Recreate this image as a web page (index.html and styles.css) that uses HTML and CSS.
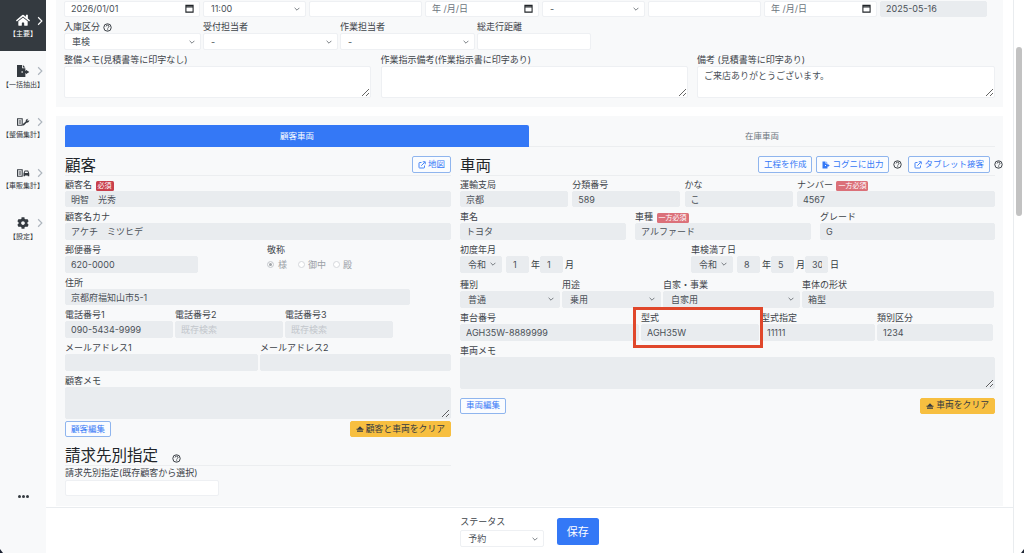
FILE: index.html
```html
<!DOCTYPE html>
<html lang="ja">
<head>
<meta charset="utf-8">
<title>入庫</title>
<link rel="stylesheet" href="styles.css">
</head>
<body>
<svg class="defs" aria-hidden="true">
  <symbol id="q" viewBox="0 0 16 16"><circle cx="8" cy="8" r="6.6" fill="none" stroke="currentColor" stroke-width="1.7"/><path d="M5.4 6.2C5.5 4.6 6.6 3.8 8.1 3.8c1.5 0 2.6.9 2.6 2.2 0 1-.6 1.5-1.3 2-.7.5-1 .8-1 1.6v.3" fill="none" stroke="currentColor" stroke-width="1.6"/><circle cx="8.3" cy="12" r="1" fill="currentColor"/></symbol>
  <symbol id="ext" viewBox="0 0 16 16"><path d="M7 3H3.2C2.5 3 2 3.5 2 4.2v8.6c0 .7.5 1.2 1.2 1.2h8.6c.7 0 1.2-.5 1.2-1.2V9" fill="none" stroke="currentColor" stroke-width="1.8"/><path d="M6.5 9.5 13.500 2.500M9.500 1.500H14.500V6.500" fill="none" stroke="currentColor" stroke-width="1.8"/></symbol>
  <symbol id="clear" viewBox="0 0 16 16"><path d="M8 2.5 13 7.5 15 7.5 15 9.5 1 9.5 1 7.5 3 7.5zM2 11h12v2.500H2z" fill="currentColor"/></symbol>
  <symbol id="chev" viewBox="0 0 8 12"><path d="M1.5 1 6.5 6 1.5 11" fill="none" stroke="currentColor" stroke-width="1.5"/></symbol>
</svg>
<div class="app">
  <nav class="side">
    <a class="nav-item active">
      <span class="nav-icons">
        <svg class="ico-home" viewBox="0 0 576 512"><path fill="currentColor" d="M280.37 148.26L96 300.11V464a16 16 0 0 0 16 16l112.06-.29a16 16 0 0 0 15.92-16V368a16 16 0 0 1 16-16h64a16 16 0 0 1 16 16v95.64a16 16 0 0 0 16 16.05L464 480a16 16 0 0 0 16-16V300L295.67 148.26a12.19 12.19 0 0 0-15.3 0zM571.6 251.47L488 182.56V44.05a12 12 0 0 0-12-12h-56a12 12 0 0 0-12 12v72.61L318.47 43a48 48 0 0 0-61 0L4.34 251.47a12 12 0 0 0-1.6 16.9l25.5 31A12 12 0 0 0 45.15 301l235.22-193.74a12.19 12.19 0 0 1 15.3 0L530.9 301a12 12 0 0 0 16.9-1.6l25.5-31a12 12 0 0 0-1.7-16.93z"/></svg>
        <svg class="ico-chev"><use href="#chev"/></svg>
      </span>
      <span class="nav-label">【主要】</span>
    </a>
    <a class="nav-item">
      <span class="nav-icons">
        <svg class="ico-file" viewBox="0 0 16 14"><path fill="currentColor" d="M1 0h5.500v3.600H10V6.500H6V8.500h4V13H1zM7.400 0 10 2.700H7.400zM10.500 5l3.800 2.500-3.800 2.500V8.600H7V6.400h3.500z"/></svg>
        <svg class="ico-chev"><use href="#chev"/></svg>
      </span>
      <span class="nav-label">【一括抽出】</span>
    </a>
    <a class="nav-item">
      <span class="nav-icons">
        <svg class="ico-mini" viewBox="0 0 14 8"><path fill="none" stroke="currentColor" stroke-width="1.1" d="M.6.6h5v6.800h-5zM1.800 2.800h2.600M1.800 5h2.600"/><path fill="currentColor" d="M6.300 7.600 6 6.500l3.400-3C9.200 2 10.200.5 12.300.5l-1.300 1.400.7 1 1.500-1c.2 1.800-1.500 3.200-3 2.800L7.400 7.800z"/></svg>
        <svg class="ico-chev"><use href="#chev"/></svg>
      </span>
      <span class="nav-label">【整備集計】</span>
    </a>
    <a class="nav-item">
      <span class="nav-icons">
        <svg class="ico-mini" viewBox="0 0 14 8"><path fill="none" stroke="currentColor" stroke-width="1.1" d="M.6.6h5v6.800h-5zM1.800 2.800h2.600M1.800 5h2.600"/><path fill="currentColor" d="M7 7.600V4.400L8.200 1.400h3.800l1.200 3v3.200h-1.600V6.600H8.600v1z"/><path fill="#f8f9fa" d="M8.800 2.300h2.600l.5 1.700H8.300z"/></svg>
        <svg class="ico-chev"><use href="#chev"/></svg>
      </span>
      <span class="nav-label">【車販集計】</span>
    </a>
    <a class="nav-item">
      <span class="nav-icons">
        <svg class="ico-cog" viewBox="0 0 512 512"><path fill="currentColor" d="M487.4 315.7l-42.6-24.6c4.3-23.2 4.3-47 0-70.2l42.6-24.6c4.9-2.8 7.1-8.6 5.5-14-11.1-35.6-30-67.8-54.7-94.6-3.8-4.1-10-5.1-14.8-2.3L380.8 110c-17.9-15.4-38.5-27.3-60.8-35.1V25.8c0-5.6-3.9-10.5-9.4-11.7-36.7-8.2-74.3-7.8-109.2 0-5.5 1.2-9.4 6.1-9.4 11.7V75c-22.2 7.9-42.8 19.8-60.8 35.1L88.7 85.5c-4.9-2.8-11-1.9-14.8 2.3-24.7 26.7-43.6 58.9-54.7 94.6-1.7 5.4.6 11.2 5.5 14L67.3 221c-4.3 23.2-4.3 47 0 70.2l-42.6 24.6c-4.9 2.8-7.1 8.6-5.5 14 11.1 35.6 30 67.8 54.7 94.6 3.8 4.1 10 5.1 14.8 2.3l42.6-24.6c17.9 15.4 38.5 27.3 60.8 35.1v49.2c0 5.6 3.9 10.5 9.4 11.7 36.7 8.2 74.3 7.8 109.2 0 5.5-1.2 9.4-6.1 9.4-11.7v-49.2c22.2-7.9 42.8-19.8 60.8-35.1l42.6 24.6c4.9 2.8 11 1.9 14.8-2.3 24.7-26.7 43.6-58.9 54.7-94.6 1.5-5.5-.7-11.3-5.6-14.1zM256 336c-44.1 0-80-35.9-80-80s35.9-80 80-80 80 35.9 80 80-35.9 80-80 80z"/></svg>
        <svg class="ico-chev"><use href="#chev"/></svg>
      </span>
      <span class="nav-label">【設定】</span>
    </a>
    <div class="nav-more"><i></i><i></i><i></i></div>
  </nav>

  <div class="main">
    <div class="scroll">
      <section class="panel panel-top">
        <div class="grid g-r1">
          <input class="ctl date" value="2026/01/01">
          <select class="ctl sel"><option>11:00</option></select>
          <input class="ctl">
          <input class="ctl date" placeholder="年 /月/日">
          <select class="ctl sel"><option>-</option></select>
          <input class="ctl">
          <input class="ctl date" placeholder="年 /月/日">
          <input class="ctl ro" value="2025-05-16">
        </div>
        <div class="grid g-r2">
          <div class="f"><label>入庫区分 <svg class="q"><use href="#q"/></svg></label><select class="ctl sel"><option>車検</option></select></div>
          <div class="f"><label>受付担当者</label><select class="ctl sel"><option>-</option></select></div>
          <div class="f"><label>作業担当者</label><select class="ctl sel"><option>-</option></select></div>
          <div class="f"><label>総走行距離</label><input class="ctl"></div>
        </div>
        <div class="grid g-r3">
          <div class="f"><label>整備メモ(見積書等に印字なし)</label><textarea class="ctl ta"></textarea></div>
          <div class="f"><label>作業指示備考(作業指示書に印字あり)</label><textarea class="ctl ta"></textarea></div>
          <div class="f"><label>備考 (見積書等に印字あり)</label><textarea class="ctl ta">ご来店ありがとうございます。</textarea></div>
        </div>
      </section>

      <section class="panel panel-main">
        <div class="tabs">
          <div class="tab on">顧客車両</div>
          <div class="tab">在庫車両</div>
        </div>
        <div class="cols">
          <div class="col-left">
            <div class="head">
              <h3>顧客</h3>
              <div class="head-btns"><button class="btn"><svg class="bi"><use href="#ext"/></svg>地図</button></div>
            </div>
            <div class="f row"><label>顧客名 <span class="badge">必須</span></label><input class="ctl ro" value="明智　光秀"></div>
            <div class="f row"><label>顧客名カナ</label><input class="ctl ro" value="アケチ　ミツヒデ"></div>
            <div class="grid g-zip row">
              <div class="f"><label>郵便番号</label><input class="ctl ro" value="620-0000"></div>
              <div class="f"><label>敬称</label>
                <div class="radios">
                  <span class="radio checked"></span><span class="rt rt1">様</span>
                  <span class="radio"></span><span class="rt">御中</span>
                  <span class="radio"></span><span class="rt">殿</span>
                </div>
              </div>
            </div>
            <div class="f row addr"><label>住所</label><input class="ctl ro" value="京都府福知山市5-1"></div>
            <div class="grid g-tel row">
              <div class="f"><label>電話番号1</label><input class="ctl ro" value="090-5434-9999"></div>
              <div class="f"><label>電話番号2</label><input class="ctl ro" placeholder="既存検索"></div>
              <div class="f"><label>電話番号3</label><input class="ctl ro" placeholder="既存検索"></div>
            </div>
            <div class="grid g-mail row">
              <div class="f"><label>メールアドレス1</label><input class="ctl ro"></div>
              <div class="f"><label>メールアドレス2</label><input class="ctl ro"></div>
            </div>
            <div class="f"><label>顧客メモ</label><textarea class="ctl ta ro"></textarea></div>
            <div class="actions a-left">
              <button class="btn">顧客編集</button>
              <button class="btn warn"><svg class="bi"><use href="#clear"/></svg>顧客と車両をクリア</button>
            </div>
            <div class="head head-bill">
              <h3>請求先別指定</h3>
              <svg class="q q-h"><use href="#q"/></svg>
            </div>
            <div class="f bill"><label>請求先別指定(既存顧客から選択)</label><input class="ctl"></div>
          </div>

          <div class="col-right">
            <div class="head">
              <h3>車両</h3>
              <div class="head-btns right">
                <button class="btn">工程を作成</button>
                <button class="btn"><svg class="bi" viewBox="0 0 16 14"><path fill="currentColor" d="M1 0h6v4h4v3H6v2h5v5H1zM8.500 0 11 2.500H8.500zM11.500 5 15.500 8l-4 3V9H8V7h3.500z"/></svg>コグニに出力</button>
                <svg class="q"><use href="#q"/></svg>
                <button class="btn btn-tablet"><svg class="bi"><use href="#ext"/></svg>タブレット接客</button>
                <svg class="q"><use href="#q"/></svg>
              </div>
            </div>
            <div class="grid g-c1 row">
              <div class="f"><label>運輸支局</label><input class="ctl ro" value="京都"></div>
              <div class="f"><label>分類番号</label><input class="ctl ro" value="589"></div>
              <div class="f"><label>かな</label><input class="ctl ro" value="こ"></div>
              <div class="f"><label>ナンバー <span class="badge soft">一方必須</span></label><input class="ctl ro" value="4567"></div>
            </div>
            <div class="grid g-c2 row">
              <div class="f"><label>車名</label><input class="ctl ro" value="トヨタ"></div>
              <div class="f"><label>車種 <span class="badge soft">一方必須</span></label><input class="ctl ro" value="アルファード"></div>
              <div class="f"><label>グレード</label><input class="ctl ro" value="G"></div>
            </div>
            <div class="grid g-c3 row-date">
              <div class="f"><label>初度年月</label>
                <div class="era">
                  <select class="ctl sel ro era-s"><option>令和</option></select>
                  <input class="ctl ro era-n" value="1"><span class="era-t">年</span>
                  <input class="ctl ro era-n" value="1"><span class="era-t">月</span>
                </div>
              </div>
              <div class="f"><label>車検満了日</label>
                <div class="era">
                  <select class="ctl sel ro era-s"><option>令和</option></select>
                  <input class="ctl ro era-n" value="8"><span class="era-t">年</span>
                  <input class="ctl ro era-n" value="5"><span class="era-t">月</span>
                  <input class="ctl ro era-n" value="30"><span class="era-t">日</span>
                </div>
              </div>
            </div>
            <div class="grid g-c4 row">
              <div class="f"><label>種別</label><select class="ctl sel ro"><option>普通</option></select></div>
              <div class="f"><label>用途</label><select class="ctl sel ro"><option>乗用</option></select></div>
              <div class="f"><label>自家・事業</label><select class="ctl sel ro"><option>自家用</option></select></div>
              <div class="f"><label>車体の形状</label><input class="ctl ro" value="箱型"></div>
            </div>
            <div class="grid g-c5 row">
              <div class="f"><label>車台番号</label><input class="ctl ro" value="AGH35W-8889999"></div>
              <div class="f mark-host"><label>型式</label><input class="ctl ro" value="AGH35W"><span class="mark"></span></div>
              <div class="f"><label>型式指定</label><input class="ctl ro" value="11111"></div>
              <div class="f"><label>類別区分</label><input class="ctl ro" value="1234"></div>
            </div>
            <div class="f"><label>車両メモ</label><textarea class="ctl ta ro"></textarea></div>
            <div class="actions a-right">
              <button class="btn">車両編集</button>
              <button class="btn warn"><svg class="bi"><use href="#clear"/></svg>車両をクリア</button>
            </div>
          </div>
        </div>
      </section>
    </div>
    <footer class="foot">
      <div class="f status"><label>ステータス</label><select class="ctl sel"><option>予約</option></select></div>
      <button class="save">保存</button>
    </footer>
  </div>
  <div class="sbar"><div class="thumb"></div></div>
</div>
</body>
</html>
```
FILE: styles.css
```css
* { box-sizing: border-box; }
html, body { margin: 0; height: 100%; overflow: hidden; background: #fff; }
body { font-family: Inter, "Noto Sans CJK JP", sans-serif; font-size: 9px; color: #343a40; }
.defs { position: absolute; width: 0; height: 0; }
.app { display: flex; height: 553px; position: relative; }
.app::before, .app::after { content: ""; position: absolute; bottom: 0; width: 3px; height: 4px; background: #1d2433; }
.app::before { left: 0; clip-path: polygon(0 0, 100% 100%, 0 100%); }
.app::after { right: 0; clip-path: polygon(100% 0, 100% 100%, 0 100%); }

/* sidebar */
.side { width: 46px; flex: none; background: #f8f9fa; display: flex; flex-direction: column; }
.nav-item { height: 50.700px; flex: none; display: flex; flex-direction: column; align-items: center; color: #343a40; }
.nav-item.active { background: #343a40; color: #fff; }
.nav-icons { height: 16px; margin-top: 12.500px; width: 46px; position: relative; display: flex; align-items: center; justify-content: center; }
.nav-label { font-size: 7px; line-height: 8px; margin-top: 1.500px; white-space: nowrap; }
.ico-chev { position: absolute; left: 37px; top: 3px; width: 6px; height: 10px; color: #adb5bd; }
.active .ico-chev { color: #fff; }
.ico-home { width: 14px; height: 12.500px; }
.ico-file { width: 15px; height: 13px; }
.ico-mini { width: 13px; height: 8px; }
.ico-cog { width: 12px; height: 12px; }
.nav-more { margin-top: auto; margin-bottom: 55px; display: flex; justify-content: center; gap: 1px; }
.nav-more i { width: 3px; height: 3px; border-radius: 50%; background: #343a40; }

/* main */
.main { flex: 1; min-width: 0; display: flex; flex-direction: column; }
.scroll { height: 507px; overflow: hidden; padding: 0 10px; }
.panel { background: #f8f9fa; }
.panel-top { padding: 0.500px 8px 9px; height: 106.500px; margin-bottom: 9.500px; }
.panel-main { padding: 9px 8px 0 9px; height: 390px; }
.grid { display: grid; }
.g-r1 { grid-template-columns: 136px 103px 113px 114px 103px 113px 113px 107px; column-gap: 3px; margin-bottom: 4px; }
.g-r2 { grid-template-columns: 137px 135px 135px 114px; column-gap: 2px; margin-bottom: 4px; }
.g-r3 { grid-template-columns: 307px 307px 298px; column-gap: 9.500px; }

.f { display: flex; flex-direction: column; min-width: 0; }
.f label { height: 12px; line-height: 12px; font-size: 9px; white-space: nowrap; display: block; color: #3d4349; }
.row { margin-bottom: 4px; }
.row-date { margin-bottom: 6.400px; }

.ctl { display: block; width: 100%; height: 16.700px; margin: 0; padding: 0 5px; border: 1px solid #eef0f3; border-radius: 2px; background: #fff; font: 9px/1 Inter, "Noto Sans CJK JP", sans-serif; color: #495057; outline: 0; }
.ctl::placeholder { color: #6c757d; }
.ro { background-color: #e9ecef; border-color: #e9ecef; }
.ro::placeholder { color: #c3c7cc; }
.date { background-image: url("data:image/svg+xml,%3Csvg xmlns='http://www.w3.org/2000/svg' viewBox='0 0 10 10'%3E%3Cpath d='M1 1.500h8v7.500H1zM1 3.200h8' fill='none' stroke='%23212529' stroke-width='1.200'/%3E%3C/svg%3E"); background-repeat: no-repeat; background-position: right 5px center; background-size: 9px 9px; padding-left: 6px; }
.sel { appearance: none; padding-left: 7px; background-image: url("data:image/svg+xml,%3Csvg xmlns='http://www.w3.org/2000/svg' viewBox='0 0 10 6'%3E%3Cpath d='M1 1l4 4 4-4' fill='none' stroke='%23495057' stroke-width='1.200'/%3E%3C/svg%3E"); background-repeat: no-repeat; background-position: right 5px center; background-size: 6px 4px; }
.ta { height: 32px; padding: 3px 6px; resize: vertical; line-height: 12px; }
.q { width: 9px; height: 9px; vertical-align: -1.500px; color: #343a40; flex: none; }

/* tabs */
.tabs { display: flex; height: 22px; }
.tab { flex: 1; text-align: center; line-height: 22px; font-size: 8.500px; color: #6c757d; border-bottom: 1px solid #eceef0; }
.tab.on { flex: 0 0 464px; background: #3478f6; color: #fff; border-radius: 2px 2px 0 0; border-bottom: 0; }

.cols { display: flex; gap: 9px; }
.col-left { width: 386px; flex: none; }
.col-right { flex: 1; min-width: 0; }
.head { display: flex; align-items: flex-end; justify-content: space-between; height: 28.700px; padding-bottom: 1.700px; border-bottom: 1px solid #eceef0; margin-bottom: 3px; }
.head h3 { margin: 0 0 -1.500px; font-size: 15.500px; line-height: 18px; font-weight: 400; color: #212529; }
.head-btns { display: flex; align-items: center; gap: 4px; }
.head-btns.right { margin-right: -8px; gap: 4px; }
.btn-tablet { margin-left: 2px; }

.btn { height: 16.700px; padding: 0 5px; border: 1px solid #8fb5ee; border-radius: 2px; background: #fafcff; color: #3478f6; font: 8.500px/1 Inter, "Noto Sans CJK JP", sans-serif; white-space: nowrap; display: inline-flex; align-items: center; }
.bi { width: 8px; height: 8px; margin-right: 2px; flex: none; }
.warn { background: #f7bf40; border-color: #f7bf40; color: #343a40; font-size: 8.800px; }
.actions { display: flex; justify-content: space-between; }
.a-left { margin-top: 2.600px; }
.a-right { margin-top: 9px; }
.actions .btn { height: 16px; }

.badge { display: inline-block; background: #c9404c; color: #fff; font-size: 7px; line-height: 10px; height: 10px; padding: 0 2px; border-radius: 1.500px; vertical-align: 0; margin-left: 1px; }
.badge.soft { background: #db7079; }

.g-zip { grid-template-columns: 133px 1fr; column-gap: 69px; }
.addr { width: 345px; }
.g-tel { grid-template-columns: 108px 108px 108px; column-gap: 2px; width: 328px; }
.g-mail { grid-template-columns: 193px 191px; column-gap: 2px; }
.radios { height: 16.700px; display: flex; align-items: center; color: #9aa0a6; font-size: 9px; }
.radio { width: 7px; height: 7px; border-radius: 50%; border: 1px solid #d5d8dc; background: #fff; flex: none; }
.radio.checked { background: #a0a4a8; box-shadow: inset 0 0 0 1px #fff; }
.rt { margin: 0 7px 0 3px; }
.rt1 { margin: 0 11px 0 4px; }

.head-bill { height: 27.500px; margin-top: 1.500px; justify-content: flex-start; gap: 14px; margin-bottom: 0.700px; }
.q-h { margin-bottom: 1px; }
.bill { width: 154px; }
.bill .ctl { margin-top: 1px; height: 15.700px; }

.g-c1 { grid-template-columns: 108px 108px 108px 198px; column-gap: 4.300px; }
.g-c2 { grid-template-columns: 166px 176px 175px; column-gap: 9px; }
.g-c3 { grid-template-columns: 227px 1fr; column-gap: 4px; }
.era { display: flex; align-items: center; }
.era-s { width: 42px; flex: none; }
.era-n { width: 23px; flex: none; padding-left: 6px; }
.era-s + .era-n { margin-left: 4px; }
.era-t { width: 11px; padding-left: 2px; flex: none; color: #343a40; }
.g-c4 { grid-template-columns: 100px 99px 137px 192px; column-gap: 2px; }
.g-c5 { grid-template-columns: 179px 118px 114px 116px; column-gap: 2px; }
.mark-host { position: relative; }
.mark { position: absolute; left: -8px; top: -5.200px; width: 130px; height: 41px; border: 3.500px solid #e0472b; pointer-events: none; }

/* footer */
.foot { flex: 1; border-top: 1px solid #e9ecef; display: flex; justify-content: center; align-items: flex-start; gap: 12.500px; background: #fff; }
.status { width: 84px; padding-top: 8.200px; }
.status label { height: 14px; line-height: 12px; }
.status .ctl { height: 17px; }
.save { width: 42px; height: 26.500px; margin-top: 10px; border: 0; border-radius: 2.500px; background: #3478f6; color: #fff; font: 11px/1 "Noto Sans CJK JP", sans-serif; }

/* scrollbar */
.sbar { width: 11px; flex: none; border-left: 1px solid #e9ecef; background: #fff; padding: 46.500px 2px 0; }
.thumb { width: 6px; height: 169px; border-radius: 3px; background: #c2c2c2; }
```
